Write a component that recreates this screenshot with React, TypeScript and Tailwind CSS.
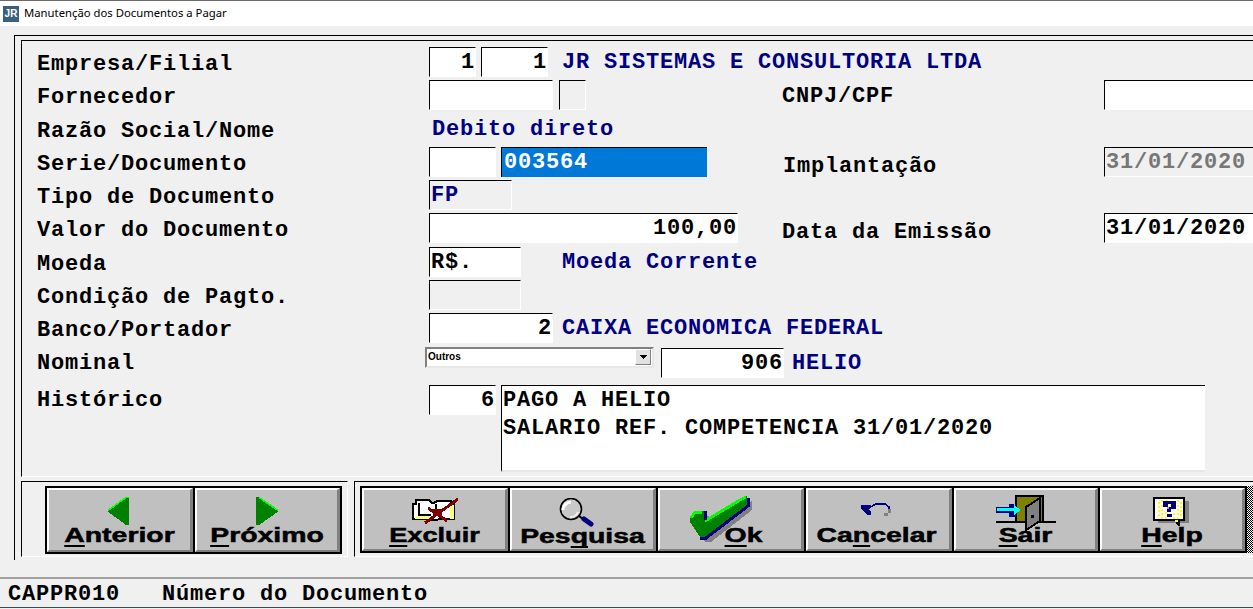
import React from "react";

const mono = "font-['Liberation_Mono',monospace] text-[22px] tracking-[0.8px] leading-[30px]";

function Field({ w, children, gray, right, cls = "" }: { w: string; children?: React.ReactNode; gray?: boolean; right?: boolean; cls?: string }) {
  return (
    <div className={`h-[30px] shrink-0 overflow-hidden border border-t-black border-l-black border-r-white border-b-white ${w} ${gray ? "" : "bg-white"} ${right ? "text-right" : "pl-px"} ${cls}`}>
      {children}
    </div>
  );
}

function Row({ label, mid, rlabel, rfield, h = "h-[33.3px]", labelCls = "mt-[3px]", rlabelCls = "" }: { label: string; mid?: React.ReactNode; rlabel?: string; rfield?: React.ReactNode; h?: string; labelCls?: string; rlabelCls?: string }) {
  return (
    <div className={`grid grid-cols-[392px_353px_322px_1fr] ${h}`}>
      <div className={`font-bold text-black whitespace-pre ${mono} ${labelCls}`}>{label}</div>
      <div className={`flex items-start ${mono}`}>{mid}</div>
      <div className={`font-bold text-black whitespace-pre ${mono} ${rlabelCls}`}>{rlabel}</div>
      <div className={`${mono}`}>{rfield}</div>
    </div>
  );
}

const Navy = ({ children, cls = "" }: { children: React.ReactNode; cls?: string }) => (
  <span className={`font-bold text-[#000080] whitespace-pre ${cls}`}>{children}</span>
);

function LeftArrow() {
  return (
    <svg width="23" height="28" viewBox="0 0 23 28" shapeRendering="crispEdges">
      <polygon points="22,0 22,28 19,28 0,14 19,0" fill="#008000" />
      <polyline points="22,0.5 19,0.5 1,13.5" fill="none" stroke="#00ff00" strokeWidth="1.6" />
    </svg>
  );
}
function RightArrow() {
  return (
    <svg width="23" height="28" viewBox="0 0 23 28" shapeRendering="crispEdges">
      <polygon points="0,0 3,0 23,14 3,28 0,28" fill="#008000" />
      <polyline points="3,0.5 22,13.5" fill="none" stroke="#00ff00" strokeWidth="1.6" />
    </svg>
  );
}
function BookX() {
  return (
    <svg width="47" height="26" viewBox="0 0 47 26" shapeRendering="crispEdges">
      <path d="M1 6h3V2h13l3 3h2l3-2h14v3h3v15H27l-2 1h-5l-2-1H1z" fill="#fff" stroke="#000" strokeWidth="2" />
      <rect x="38" y="7" width="4" height="14" fill="#ffff80" />
      <rect x="3" y="18" width="14" height="3" fill="#ffff80" />
      <path d="M7 5v12h12M24 6v10" fill="none" stroke="#000" strokeWidth="2" />
      <path d="M13 25L46 1" stroke="#800000" strokeWidth="3" fill="none" />
      <path d="M16 10L35 23" stroke="#800000" strokeWidth="3" fill="none" />
      <rect x="21" y="11" width="9" height="7" fill="#800000" />
    </svg>
  );
}
function Magnifier() {
  return (
    <svg width="37" height="29" viewBox="0 0 37 29">
      <circle cx="13" cy="11" r="10.5" fill="#c8c8c8" stroke="#000" strokeWidth="1.6" />
      <path d="M5 12a8 8 0 0 1 8-8" fill="none" stroke="#fff" strokeWidth="3" />
      <path d="M12 19a8 8 0 0 0 8-5" fill="none" stroke="#f0f0f0" strokeWidth="2" />
      <path d="M21 18l4 3" stroke="#000" strokeWidth="2" />
      <path d="M26 21l7 5" stroke="#000080" strokeWidth="5" strokeLinecap="round" />
    </svg>
  );
}
function Check() {
  return (
    <svg width="64" height="48" viewBox="0 0 64 48" shapeRendering="crispEdges">
      <path d="M0 22L5 15H14V24L50 3L57 0V9L16 41H10L0 26z" fill="#808080" transform="translate(5 5)" />
      <path d="M0 22L5 15H14V24L50 3L57 0V9L16 41H10L0 26z" fill="#008000" />
      <path d="M1 22L5 16H12M15 25L50 4L56 1" fill="none" stroke="#00ff00" strokeWidth="3" />
      <path d="M15 15V24M10 42H16L58 10V2" fill="none" stroke="#000080" strokeWidth="3" />
    </svg>
  );
}
function Undo() {
  return (
    <svg width="30" height="14" viewBox="0 0 30 14" shapeRendering="crispEdges">
      <polygon points="0,2 10,2 10,5 7,6 10,9 10,12 7,12 0,6" fill="#000080" />
      <path d="M8 5L15 1h9l4 3v3" fill="none" stroke="#000080" strokeWidth="1.6" />
      <rect x="27" y="6" width="3" height="4" fill="#808080" />
      <rect x="23" y="10" width="4" height="3" fill="#808080" />
    </svg>
  );
}
function Door() {
  return (
    <svg width="60" height="36" viewBox="0 0 60 36" shapeRendering="crispEdges">
      <rect x="0" y="26" width="60" height="2" fill="#000" />
      <rect x="20" y="1" width="27" height="26" fill="#808000" stroke="#000" strokeWidth="2" />
      <polygon points="30,12 44,3 44,26 30,35" fill="#808080" stroke="#000" strokeWidth="2" />
      <rect x="35" y="20" width="3" height="3" fill="#000" />
      <rect x="13" y="9" width="5" height="3" fill="#000080" />
      <rect x="13" y="18" width="7" height="4" fill="#000080" />
      <rect x="0" y="12" width="20" height="6" fill="#000080" />
      <rect x="1" y="13" width="17" height="3" fill="#00ffff" />
      <polygon points="18,10 25,15 18,20" fill="#00ffff" />
    </svg>
  );
}
function HelpIcon() {
  const dots = [[5, 5], [8, 3], [13, 3], [24, 3], [27, 5], [5, 9], [8, 8], [27, 9], [24, 8], [5, 13], [8, 12], [27, 13], [24, 12], [5, 17], [8, 16], [27, 17], [24, 16], [8, 20], [12, 20], [20, 20], [24, 20], [12, 15], [20, 16]];
  return (
    <svg width="36" height="29" viewBox="0 0 36 29" shapeRendering="crispEdges">
      <rect x="5" y="4" width="31" height="22" fill="#808080" />
      <rect x="1" y="1" width="30" height="22" fill="#fff" stroke="#000" strokeWidth="2" />
      <polygon points="21,23 27,23 27,29 25,29" fill="#000" />
      <rect x="22" y="23" width="3" height="2" fill="#ffff00" />
      {dots.map(([x, y], i) => (
        <rect key={i} x={x} y={y} width="2" height="2" fill="#ffff00" />
      ))}
      <path d="M10 4h13v8h-5v3h-4v-5h4V7h-3v3h-5z" fill="#000080" />
      <rect x="14" y="10" width="2" height="2" fill="#a0a0c0" />
      <rect x="14" y="17" width="5" height="3" fill="#000080" />
    </svg>
  );
}

function Btn({ w, icon, label, cls = "", iconCls = "" }: { w: string; icon: React.ReactNode; label: [string, string, string]; cls?: string; iconCls?: string }) {
  return (
    <div className={`relative h-full shrink-0 bg-[#c0c0c0] border-2 border-t-white border-l-white border-r-[3px] border-r-[#808080] border-b-[#808080] ${w}`}>
      <div className={`absolute left-0 right-0 flex justify-center ${iconCls}`}>{icon}</div>
      <div className={`absolute left-0 right-0 top-[33px] text-center font-['Liberation_Sans',sans-serif] font-bold text-[20px] leading-[24px] text-black whitespace-pre [-webkit-text-stroke:0.5px_black] ${cls}`}>
        {label[0]}
        <span className="underline decoration-2 underline-offset-[3px] [text-decoration-skip-ink:none]">{label[1]}</span>
        {label[2]}
      </div>
    </div>
  );
}

export default function App() {
  return (
    <div className="w-[1253px] h-[609px] overflow-hidden flex flex-col bg-[#f0f0f0]">
      <div className="h-[26px] shrink-0 bg-white border-t border-t-[#6b6b6b] flex items-center pl-[3px]">
        <div className="w-[16px] h-[16px] bg-[#3a6080] flex items-center justify-center text-white font-['Liberation_Sans',sans-serif] font-bold text-[10px] leading-none">JR</div>
        <span className="ml-[5px] font-['Noto_Sans',sans-serif] text-[11.3px] text-black">Manutenção dos Documentos a Pagar</span>
      </div>

      <div className="flex-1 pt-[9px] pl-[14px]">
        <div className="h-[525px] border-t border-l border-black pl-[6px] pt-[4px]">
          <div className="h-[437px] border-t border-l border-black border-b border-b-white pl-[15px] pt-[6px]">
            <Row label="Empresa/Filial" mid={<><Field w="w-[47px]" right cls="font-bold">1</Field><Field w="w-[67px] ml-[5px]" right cls="font-bold">1</Field><span className="ml-[14px] mt-px"><Navy>JR SISTEMAS E CONSULTORIA LTDA</Navy></span></>} />
            <Row label="Fornecedor" mid={<><Field w="w-[124px]" /><Field w="w-[27px] ml-[6px]" gray /></>} rlabel="CNPJ/CPF" rlabelCls="mt-[2px]" rfield={<Field w="w-[200px]" />} />
            <Row label="Razão Social/Nome" mid={<span className="ml-[3px] mt-px"><Navy>Debito direto</Navy></span>} />
            <Row
              label="Serie/Documento"
              mid={<><Field w="w-[67px]" /><div className="ml-[5px] w-[206px] h-[30px] bg-[#0078d7] border-t border-l border-black text-white pl-[2px] font-bold">003564</div></>}
              rlabel="Implantação"
              rlabelCls="ml-px mt-[5px]"
              rfield={<Field w="w-[200px]" gray cls="text-[#777777] font-bold">31/01/2020</Field>}
            />
            <Row label="Tipo de Documento" mid={<Field w="w-[83px]" gray cls="text-[#000080] font-bold">FP</Field>} />
            <Row label="Valor do Documento" mid={<Field w="w-[309px]" right cls="font-bold">100,00</Field>} rlabel="Data da Emissão" rlabelCls="mt-[5px]" rfield={<Field w="w-[200px]" cls="font-bold">31/01/2020</Field>} />
            <Row label="Moeda" mid={<><Field w="w-[92px]" cls="font-bold">R$.</Field><span className="ml-[41px] mt-px"><Navy>Moeda Corrente</Navy></span></>} />
            <Row label="Condição de Pagto." mid={<Field w="w-[92px]" gray />} />
            <Row label="Banco/Portador" mid={<><Field w="w-[124px]" right cls="font-bold">2</Field><span className="ml-[9px] mt-px"><Navy>CAIXA ECONOMICA FEDERAL</Navy></span></>} />
            <Row
              h="h-[38.5px]"
              labelCls="mt-[2px]"
              label="Nominal"
              mid={
                <>
                  <div className="-ml-[4px] w-[229px] h-[21px] shrink-0 bg-white border-2 border-t-[#808080] border-l-[#808080] border-r-[#e8e8e8] border-b-[#e8e8e8] flex items-center justify-between">
                    <span className="pl-px font-['Liberation_Sans',sans-serif] font-bold text-[10px] leading-none tracking-normal text-black">Outros</span>
                    <span className="w-[16px] h-[16px] mr-px bg-[#e1e1e1] border border-t-white border-l-white border-r-[#808080] border-b-[#808080] flex items-center justify-center">
                      <svg width="8" height="4" viewBox="0 0 8 4" shapeRendering="crispEdges"><polygon points="0,0 8,0 4,4" fill="#000" /></svg>
                    </span>
                  </div>
                  <div className="mt-[1px] ml-[7px] w-[123px]">
                    <Field w="w-[123px]" right cls="font-bold">906</Field>
                  </div>
                  <span className="ml-[8px] mt-[2px]"><Navy>HELIO</Navy></span>
                </>
              }
            />
            <div className="grid grid-cols-[392px_1fr] h-[87px]">
              <div className={`font-bold text-black mt-px ${mono}`}>Histórico</div>
              <div className={`flex items-start ${mono}`}>
                <Field w="w-[67px]" right cls="font-bold">6</Field>
                <div className="ml-[5px] w-[704px] h-[87px] bg-white border-t border-l border-black border-b-2 border-b-[#e8e8e8] pl-px pt-px font-bold text-black leading-[28px] whitespace-pre">
                  {"PAGO A HELIO\nSALARIO REF. COMPETENCIA 31/01/2020"}
                </div>
              </div>
            </div>
          </div>

          <div className="mt-[4px] flex">
            <div className="w-[327px] h-[76px] shrink-0 border border-t-black border-l-black border-r-white border-b-white pl-[23px] pt-[4px]">
              <div className="flex w-[297px] h-[68px] bg-black p-[2px] gap-[2px]">
                <Btn w="w-[146px]" icon={<LeftArrow />} iconCls="top-[7px] -translate-x-[1px]" cls="scale-x-[1.42]" label={["", "A", "nterior"]} />
                <Btn w="w-[145px]" icon={<RightArrow />} iconCls="top-[7px]" cls="scale-x-[1.42]" label={["", "P", "róximo"]} />
              </div>
            </div>
            <div className="ml-[6px] flex-1 h-[76px] border-t border-l border-black border-b border-b-white pl-[5px] pt-[4px]">
              <div className="flex h-[67px] bg-black py-[2px] pl-[2px] gap-[2px]">
                <Btn w="w-[146px]" icon={<BookX />} iconCls="top-[8px] translate-x-[1px]" cls="scale-x-[1.36]" label={["", "E", "xcluir"]} />
                <Btn w="w-[146px]" icon={<Magnifier />} iconCls="top-[8px] -translate-x-[6px]" cls="top-[34px] scale-x-[1.42]" label={["Pes", "q", "uisa"]} />
                <Btn w="w-[146px]" icon={<Check />} iconCls="top-[6px] -translate-x-[9px]" cls="translate-x-[13px] scale-x-[1.42]" label={["", "O", "k"]} />
                <Btn w="w-[146px]" icon={<Undo />} iconCls="top-[13px] -translate-x-[3px]" cls="-translate-x-[2px] scale-x-[1.42]" label={["Ca", "n", "celar"]} />
                <Btn w="w-[144px]" icon={<Door />} iconCls="top-[5px]" cls="scale-x-[1.42]" label={["", "S", "air"]} />
                <Btn w="w-[145px]" icon={<HelpIcon />} iconCls="top-[7px] -translate-x-[1px]" cls="scale-x-[1.42]" label={["", "H", "elp"]} />
                <div className="flex-1 -my-[2px] bg-[repeating-conic-gradient(#000_0_25%,#fff_0_50%)] bg-[length:2px_2px]" />
              </div>
            </div>
          </div>
        </div>
      </div>

      <div className="h-[31px] shrink-0 mb-px bg-[#f0f0f0] border-t-2 border-t-[#a0a0a0] border-b border-b-[#3b4b4f] pl-[8px] pt-[3px] flex items-center">
        <span className={`text-black font-bold whitespace-pre ${mono}`}>{"CAPPR010   Número do Documento"}</span>
      </div>
    </div>
  );
}
